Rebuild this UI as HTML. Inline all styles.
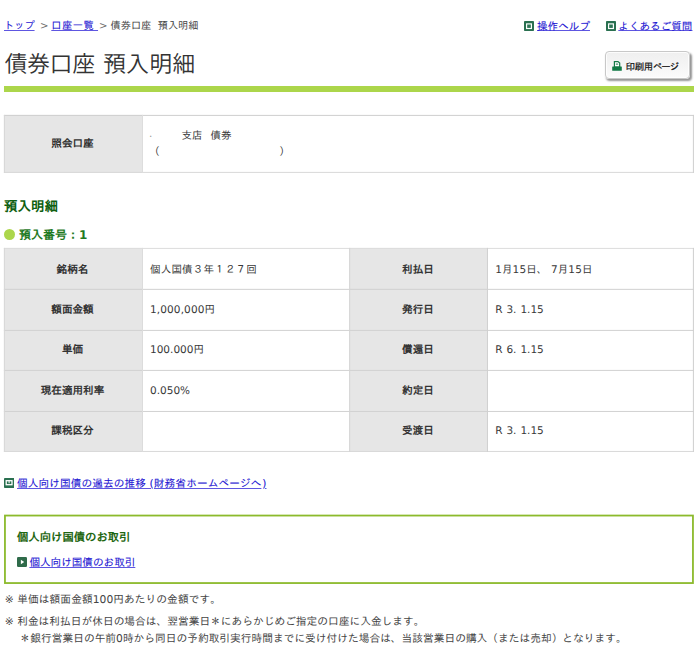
<!DOCTYPE html>
<html lang="ja">
<head>
<meta charset="utf-8">
<title>債券口座 預入明細</title>
<style>
html,body{margin:0;padding:0;background:#fff;}
body{width:700px;height:654px;position:relative;overflow:hidden;
  font-family:"DejaVu Sans","Liberation Sans","IPAGothic","Noto Sans CJK JP",sans-serif;
  font-size:10.6px;color:#3a3a3a;text-rendering:geometricPrecision;}
a{color:#1c14d2;text-decoration:underline;text-underline-offset:1px;text-decoration-color:rgba(40,30,215,.75);-webkit-text-stroke:.08px #1c14d2;}
.abs{position:absolute;white-space:nowrap;}
.t{position:absolute;white-space:nowrap;line-height:14px;height:14px;}
/* icons */
.ic{position:absolute;display:block;}
/* crumb */
#crumb .t{font-size:10.2px;top:19.5px;color:#444;}
#help .t{font-size:10.6px;top:19.5px;}
#help a{text-underline-offset:0;}
#title{left:4.7px;top:48px;font-size:22.6px;line-height:34px;height:34px;color:#333;font-weight:350;font-family:"Liberation Sans","Noto Sans CJK JP",sans-serif;}
#bar{left:4px;top:86px;width:690px;height:6px;background:#acd64b;}
#print{left:605px;top:51px;width:85px;height:28px;border:1px solid #c8c8c8;border-radius:4px;background:linear-gradient(#efefef,#fbfbfb);box-shadow:1.5px 2px 2px rgba(0,0,0,.42), inset 0 0 0 1px rgba(255,255,255,.8);box-sizing:border-box;}
/* tables */
.th{position:absolute;line-height:14px;height:14px;text-align:center;font-weight:bold;font-size:10.6px;color:#333;white-space:nowrap;}
.td{font-size:10.5px;color:#383838;}
h2{position:absolute;margin:0;left:4px;top:200.3px;font-size:13.5px;line-height:14px;color:#0f5f10;font-weight:bold;white-space:nowrap;}
h3{position:absolute;margin:0;left:19px;top:227.5px;font-size:12px;line-height:14px;color:#1f7a1f;font-weight:bold;white-space:nowrap;}
#dot{left:4px;top:228.5px;width:11px;height:11px;border-radius:50%;background:#acd64b;}
.note{color:#444;font-size:10.72px;}
</style>
</head>
<body>
<div id="crumb">
<span class="t" style="left:4px"><a href="#">トップ</a></span>
<span class="t" style="left:40px;color:#6a6a6a">&gt;</span>
<span class="t" style="left:51.3px;letter-spacing:.55px"><a href="#">口座一覧&nbsp;</a></span>
<span class="t" style="left:99px;color:#6a6a6a">&gt;</span>
<span class="t" style="left:110.5px">債券口座 <span style="position:absolute;left:47.2px;top:0">預入明細</span></span>
</div>
<div id="help">
<svg class="ic" style="left:524px;top:21px" width="10" height="10" viewBox="0 0 10 10"><rect width="10" height="10" rx="0.8" fill="#2a7050"/><rect x="2.6" y="2.9" width="4.8" height="4.6" fill="#2f7555" stroke="#fff" stroke-width="1.15"/></svg>
<span class="t" style="left:537px"><a href="#">操作ヘルプ</a></span>
<svg class="ic" style="left:606px;top:21px" width="10" height="10" viewBox="0 0 10 10"><rect width="10" height="10" rx="0.8" fill="#2a7050"/><rect x="2.6" y="2.9" width="4.8" height="4.6" fill="#2f7555" stroke="#fff" stroke-width="1.15"/></svg>
<span class="t" style="left:618.3px"><a href="#">よくあるご質問</a></span>
</div>
<div id="title" class="abs">債券口座 <span style="letter-spacing:.55px;margin-left:1.8px">預入明細</span></div>
<div id="print" class="abs">
<svg style="position:absolute;left:6.3px;top:9px" width="10" height="10" viewBox="0 0 10 10"><path d="M2.4 0.6h3.6l1.7 1.5v4h-5.3z" fill="#fff" stroke="#167a48" stroke-width="1.2"/><path d="M3.8 3.1h2.4" stroke="#167a48" stroke-width="1"/><rect x="0.2" y="5.4" width="9.6" height="4.3" rx="0.5" fill="#117a45"/></svg>
<span class="t" style="left:19.7px;top:8.6px;font-size:9.4px;color:#1a1a1a;letter-spacing:-.3px;-webkit-text-stroke:.25px #1a1a1a">印刷用<span style="letter-spacing:-1px">ページ</span></span>
</div>
<div id="bar" class="abs"></div>

<!-- table 1 -->
<svg class="ic" style="left:0;top:110px" width="700" height="70" viewBox="0 110 700 70">
<rect x="3.9" y="114.9" width="139" height="58" fill="#e6e6e6"/>
<rect x="3.9" y="114.90" width="690.00" height="1" fill="#cfcfcf"/>
<rect x="3.9" y="171.90" width="690.00" height="1" fill="#d9d9d9"/>
<rect x="3.90" y="114.90" width="1" height="58.00" fill="#d6d6d6"/>
<rect x="142.00" y="114.90" width="1" height="58.00" fill="#dddddd"/>
<rect x="692.90" y="114.90" width="1" height="58.00" fill="#cfcfcf"/>
</svg>
<span class="th" style="left:4px;width:137px;top:137.3px">照会口座</span>
<span class="t td" style="left:149px;top:126.5px;color:#999">.</span>
<span class="t td" style="left:181.5px;top:128.9px">支店</span>
<span class="t td" style="left:210.5px;top:128.9px">債券</span>
<span class="t td" style="left:149.3px;top:145px">（</span>
<span class="t td" style="left:279.3px;top:145px">）</span>

<h2>預入明細</h2>
<div id="dot" class="abs"></div>
<h3>預入番号：1</h3>

<!-- table 2 -->
<svg class="ic" style="left:0;top:244px" width="700" height="212" viewBox="0 244 700 212">
<rect x="3.9" y="247.9" width="139" height="204.05" fill="#e6e6e6"/>
<rect x="349.2" y="247.9" width="138.7" height="204.05" fill="#e6e6e6"/>
<rect x="3.9" y="247.90" width="690.00" height="1" fill="#dcdcdc"/>
<rect x="3.9" y="288.85" width="690.00" height="1" fill="#d1d1d1"/>
<rect x="3.9" y="329.90" width="690.00" height="1" fill="#d1d1d1"/>
<rect x="3.9" y="369.90" width="690.00" height="1" fill="#d1d1d1"/>
<rect x="3.9" y="410.95" width="690.00" height="1" fill="#d1d1d1"/>
<rect x="3.9" y="450.95" width="690.00" height="1" fill="#d9d9d9"/>
<rect x="3.90" y="247.90" width="1" height="204.05" fill="#d8d8d8"/>
<rect x="142.00" y="247.90" width="1" height="204.05" fill="#dcdcdc"/>
<rect x="349.20" y="247.90" width="1" height="204.05" fill="#d4d4d4"/>
<rect x="486.95" y="247.90" width="1" height="204.05" fill="#d0d0d0"/>
<rect x="692.90" y="247.90" width="1" height="204.05" fill="#cfcfcf"/>
</svg>
<span class="th" style="left:4px;width:137px;top:262.7px">銘柄名</span>
<span class="t td" style="left:150px;top:262.7px;letter-spacing:.2px">個人国債３年１２７回</span>
<span class="th" style="left:350px;width:136px;top:262.7px">利払日</span>
<span class="t td" style="left:495.2px;top:262.7px;letter-spacing:.12px">1月15日、 7月15日</span>
<span class="th" style="left:4px;width:137px;top:302.5px">額面金額</span>
<span class="t td" style="left:150px;top:302.9px;letter-spacing:.12px">1,000,000円</span>
<span class="th" style="left:350px;width:136px;top:302.5px">発行日</span>
<span class="t td" style="left:495.2px;top:302.9px;word-spacing:.6px">R 3. 1.15</span>
<span class="th" style="left:4px;width:137px;top:343.0px">単価</span>
<span class="t td" style="left:150px;top:343.4px">100.000円</span>
<span class="th" style="left:350px;width:136px;top:343.0px">償還日</span>
<span class="t td" style="left:495.2px;top:343.4px;word-spacing:.6px">R 6. 1.15</span>
<span class="th" style="left:4px;width:137px;top:383.5px">現在適用利率</span>
<span class="t td" style="left:150px;top:383.9px">0.050%</span>
<span class="th" style="left:350px;width:136px;top:383.5px">約定日</span>
<span class="th" style="left:4px;width:137px;top:424.1px">課税区分</span>
<span class="th" style="left:350px;width:136px;top:424.1px">受渡日</span>
<span class="t td" style="left:495.2px;top:424.4px;word-spacing:.6px">R 3. 1.15</span>

<svg class="ic" style="left:4px;top:478px" width="10.4" height="10" viewBox="0 0 10.4 10"><rect width="10.4" height="10" rx="0.8" fill="#2a7050"/><rect x="2.2" y="2.7" width="5.8" height="4" fill="#2a7050" stroke="#fff" stroke-width="1.3"/><path d="M5.1 2.7v2.6" stroke="#fff" stroke-width="1"/></svg>
<span class="t" style="left:17px;top:476.7px;letter-spacing:.16px"><a href="#">個人向け国債の過去の推移 (財務省ホームページへ<span style="margin-left:.8px">)</span></a></span>

<svg class="ic" style="left:0;top:510px" width="700" height="80" viewBox="0 0 700 80"><rect x="4.95" y="5.55" width="688" height="67.5" fill="#fff" stroke="#8cba2c" stroke-width="1.8"/></svg>
<span class="t" style="left:17px;top:529.8px;font-weight:bold;color:#1f6712;font-size:11.35px">個人向け国債のお取引</span>
<svg class="ic" style="left:17px;top:557px" width="10" height="10" viewBox="0 0 10 10"><rect width="10" height="10" rx="1.2" fill="#2f6b4a"/><path d="M3.9 2.7L7.2 5L3.9 7.3z" fill="#fff"/></svg>
<span class="t" style="left:29.4px;top:555.7px"><a href="#">個人向け国債のお取引</a></span>

<span class="t note" style="left:4.8px;top:593.3px;letter-spacing:.05px">※ 単価は額面金額100円あたりの金額です。</span>
<span class="t note" style="left:4.8px;top:614.9px">※ 利金は利払日が休日の場合は、翌営業日＊にあらかじめご指定の口座に入金します。</span>
<span class="t note" style="left:19.6px;top:631.8px">＊銀行営業日の午前0時から同日の予約取引実行時間までに受け付けた場合は、当該営業日の購入（または売却）となります。</span>
</body>
</html>
